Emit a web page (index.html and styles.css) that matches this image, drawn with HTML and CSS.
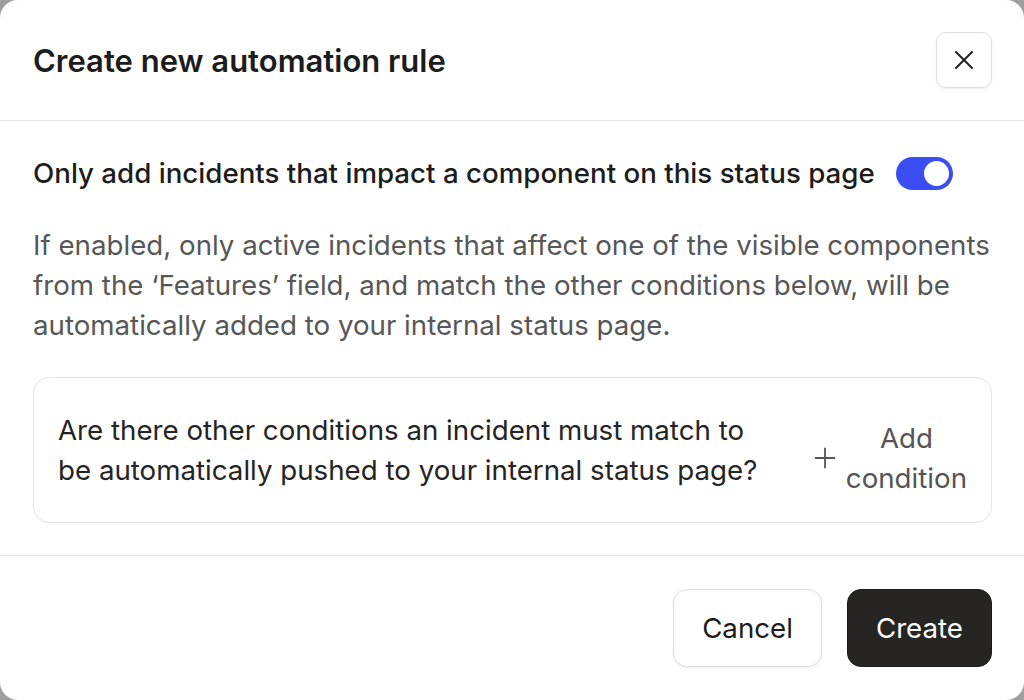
FILE: index.html
```html
<!DOCTYPE html>
<html lang="en">
<head>
<meta charset="utf-8">
<title>Create new automation rule</title>
<link rel="stylesheet" href="styles.css">
</head>
<body>
<div class="modal">
  <header class="modal-header">
    <h1 class="modal-title">Create new automation rule</h1>
    <button class="close-btn" aria-label="Close">
      <svg width="22" height="22" viewBox="0 0 22 22" fill="none" stroke="#1f1f1f" stroke-width="1.9" stroke-linecap="round"><path d="M3 3L19 19M19 3L3 19"/></svg>
    </button>
  </header>
  <main class="modal-body">
    <div class="toggle-row">
      <span class="toggle-label">Only add incidents that impact a component on this status page</span>
      <span class="toggle on"><span class="knob"></span></span>
    </div>
    <p class="desc">If enabled, only active incidents that affect one of the visible components from the ‘Features’ field, and match the other conditions below, will be automatically added to your internal status page.</p>
    <div class="cond-box">
      <p class="cond-text">Are there other conditions an incident must match to be automatically pushed to your internal status page?</p>
      <button class="add-btn">
        <svg class="plus" width="22" height="22" viewBox="0 0 22 22" fill="none" stroke="#555" stroke-width="1.8" stroke-linecap="round"><path d="M11 1.5V20.5M1.5 11H20.5"/></svg>
        <span class="add-label">Add condition</span>
      </button>
    </div>
  </main>
  <footer class="modal-footer">
    <button class="btn btn-secondary">Cancel</button>
    <button class="btn btn-primary">Create</button>
  </footer>
</div>
</body>
</html>
```
FILE: styles.css
```css
* { box-sizing: border-box; }
html, body { margin: 0; padding: 0; }
body {
  background: #9f9f9f;
  font-family: Inter, "Liberation Sans", sans-serif;
  width: 1024px;
  height: 700px;
  overflow: hidden;
}
.modal {
  width: 1024px;
  height: 700px;
  background: #fff;
  border-radius: 18px;
  display: flex;
  flex-direction: column;
  overflow: hidden;
}
.modal-header {
  display: flex;
  align-items: center;
  justify-content: space-between;
  padding: 32px 32px 32px 33px;
  border-bottom: 1px solid #e3e3e3;
  height: 121px;
}
.modal-title {
  margin: 0;
  font-size: 31px;
  font-weight: 600;
  color: #1c1c1c;
}
.close-btn {
  width: 56px;
  height: 56px;
  border: 1px solid #dedede;
  border-radius: 10px;
  background: #fff;
  box-shadow: 0 1px 2px rgba(0,0,0,0.08);
  display: flex;
  align-items: center;
  justify-content: center;
  padding: 0;
}
.modal-body {
  padding: 32px 32px 32px 33px;
  border-bottom: 1px solid #e3e3e3;
  display: flex;
  flex-direction: column;
  gap: 32px;
}
.toggle-row {
  display: flex;
  align-items: center;
  gap: 21px;
  height: 40px;
}
.toggle-label {
  font-size: 27.7px;
  font-weight: 500;
  color: #1c1c1c;
}
.toggle {
  width: 57px;
  height: 33px;
  border-radius: 17px;
  background: #3b4ef3;
  display: flex;
  align-items: center;
  justify-content: flex-end;
  padding: 4px;
}
.knob {
  width: 25px;
  height: 25px;
  border-radius: 50%;
  background: #fff;
}
.desc {
  margin: 0;
  font-size: 27.7px;
  line-height: 40px;
  color: #575757;
}
.cond-box {
  border: 1px solid #e3e3e3;
  border-radius: 16px;
  padding: 32px 24px 24px;
  display: flex;
  align-items: flex-start;
  gap: 56px;
}
.cond-text {
  flex: 1;
  margin: 0;
  font-size: 27.7px;
  line-height: 40px;
  color: #242424;
}
.add-btn {
  display: flex;
  align-items: center;
  gap: 10px;
  background: none;
  border: none;
  padding: 8px 0 0;
  font-family: inherit;
  font-size: 27.7px;
  line-height: 40px;
  color: #555;
}
.add-label {
  width: min-content;
  text-align: center;
}
.modal-footer {
  flex: 1;
  display: flex;
  justify-content: flex-end;
  align-items: center;
  gap: 25px;
  padding: 0 32px;
}
.btn {
  height: 78px;
  border-radius: 14px;
  font-family: inherit;
  font-size: 27.7px;
  padding: 0 28px;
}
.btn-secondary {
  background: #fff;
  border: 1px solid #dcdcdc;
  color: #1c1c1c;
  box-shadow: 0 1px 2px rgba(0,0,0,0.06);
}
.btn-primary {
  background: #262524;
  border: 1px solid #1a1a1a;
  color: #fff;
}
```
